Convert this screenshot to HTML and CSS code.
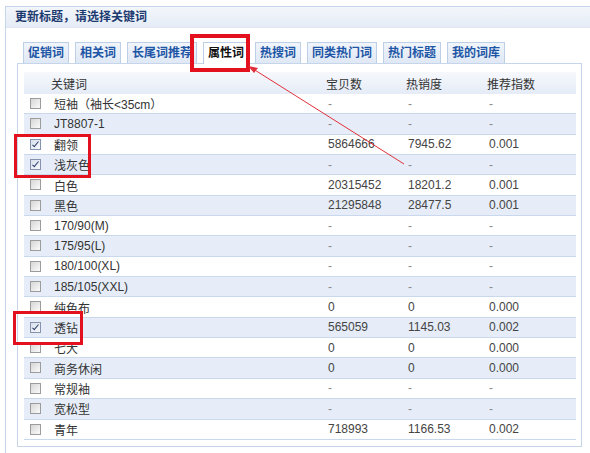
FILE: index.html
```html
<!DOCTYPE html>
<html lang="zh-CN">
<head>
    <meta charset="UTF-8">
    <title>更新标题</title>
    <link rel="stylesheet" href="styles.css">
</head>
<body>
    <div class="box">
        <div class="box-title">更新标题，请选择关键词</div>
        <div class="box-body">
            <ul class="tabs">
                <li>促销词</li>
                <li>相关词</li>
                <li>长尾词推荐</li>
                <li class="active">属性词</li>
                <li>热搜词</li>
                <li>同类热门词</li>
                <li>热门标题</li>
                <li>我的词库</li>
            </ul>
            <div class="panel">
                <table class="kw-table">
                    <thead>
                        <tr>
                            <th class="c-check"></th>
                            <th class="c-word">关键词</th>
                            <th class="c-num">宝贝数</th>
                            <th class="c-hot">热销度</th>
                            <th>推荐指数</th>
                        </tr>
                    </thead>
                    <tbody>
                        <tr><td><span class="cb"></span></td><td>短袖（袖长&lt;35cm）</td><td class="dash">-</td><td class="dash">-</td><td class="dash">-</td></tr>
                        <tr><td><span class="cb"></span></td><td>JT8807-1</td><td class="dash">-</td><td class="dash">-</td><td class="dash">-</td></tr>
                        <tr><td><span class="cb on"></span></td><td>翻领</td><td>5864666</td><td>7945.62</td><td>0.001</td></tr>
                        <tr><td><span class="cb on"></span></td><td>浅灰色</td><td class="dash">-</td><td class="dash">-</td><td class="dash">-</td></tr>
                        <tr><td><span class="cb"></span></td><td>白色</td><td>20315452</td><td>18201.2</td><td>0.001</td></tr>
                        <tr><td><span class="cb"></span></td><td>黑色</td><td>21295848</td><td>28477.5</td><td>0.001</td></tr>
                        <tr><td><span class="cb"></span></td><td>170/90(M)</td><td class="dash">-</td><td class="dash">-</td><td class="dash">-</td></tr>
                        <tr><td><span class="cb"></span></td><td>175/95(L)</td><td class="dash">-</td><td class="dash">-</td><td class="dash">-</td></tr>
                        <tr><td><span class="cb"></span></td><td>180/100(XL)</td><td class="dash">-</td><td class="dash">-</td><td class="dash">-</td></tr>
                        <tr><td><span class="cb"></span></td><td>185/105(XXL)</td><td class="dash">-</td><td class="dash">-</td><td class="dash">-</td></tr>
                        <tr><td><span class="cb"></span></td><td>纯色布</td><td>0</td><td>0</td><td>0.000</td></tr>
                        <tr><td><span class="cb on"></span></td><td>透钻</td><td>565059</td><td>1145.03</td><td>0.002</td></tr>
                        <tr><td><span class="cb"></span></td><td>七大</td><td>0</td><td>0</td><td>0.000</td></tr>
                        <tr><td><span class="cb"></span></td><td>商务休闲</td><td>0</td><td>0</td><td>0.000</td></tr>
                        <tr><td><span class="cb"></span></td><td>常规袖</td><td class="dash">-</td><td class="dash">-</td><td class="dash">-</td></tr>
                        <tr><td><span class="cb"></span></td><td>宽松型</td><td class="dash">-</td><td class="dash">-</td><td class="dash">-</td></tr>
                        <tr><td><span class="cb"></span></td><td>青年</td><td>718993</td><td>1166.53</td><td>0.002</td></tr>
                    </tbody>
                </table>
            </div>
        </div>
    </div>

    <!-- annotation marks drawn over the form -->
    <div class="mark mark-tab"></div>
    <div class="mark mark-rows"></div>
    <div class="mark mark-row"></div>
    <svg class="arrow" width="590" height="453" viewBox="0 0 590 453">
        <line x1="404" y1="164" x2="250" y2="67" stroke="#e0303a" stroke-width="1"/>
        <path d="M248 66 L258 68 L254 73 Z" fill="#e0303a"/>
    </svg>
</body>
</html>
```

FILE: styles.css
```css
body {
    margin: 0;
    font-family: "Liberation Sans", "Noto Sans CJK SC", sans-serif;
    font-size: 12px;
    color: #333;
    background: #fff;
    overflow: hidden;
    height: 453px;
    position: relative;
}
.box {
    margin: 6px 0 0 5px;
    width: 600px;
    height: 480px;
    border: 1px solid #c6d5ea;
}
.box-title {
    height: 20px;
    line-height: 20px;
    padding-left: 9px;
    font-weight: bold;
    color: #1d3a70;
    background: linear-gradient(#f3f6fb, #e5ecf6);
    border-bottom: 1px solid #dde6f2;
}
.box-body {
    padding: 14px 0 0 11px;
}
.tabs {
    list-style: none;
    margin: 0 0 -1px 0;
    padding: 0 0 0 6px;
    display: flex;
    position: relative;
}
.tabs li {
    height: 20px;
    line-height: 21px;
    padding: 0 4px;
    margin-right: 6px;
    border: 1px solid #bccfe7;
    border-bottom: none;
    background: linear-gradient(#f1f5fb, #dfe8f5);
    color: #1e56a6;
    font-weight: bold;
}
.tabs li.active {
    background: #fff;
    color: #111;
    height: 21px;
}
.panel {
    width: 552px;
    padding: 8px 5px 6px 6px;
    border: 1px solid #c6d5ea;
}
.kw-table {
    width: 552px;
    border-collapse: collapse;
}
.kw-table th {
    height: 22px;
    padding: 0 0 0 5px;
    text-align: left;
    font-weight: normal;
    color: #333;
    background: linear-gradient(#f6f8fc, #e5ecf7);
}
.kw-table td {
    height: 19.35px;
    padding: 0 0 0 7px;
    border-bottom: 1px solid #c9d8ed;
    color: #444;
}
.kw-table tbody tr:nth-child(even) td {
    background: #e6edf8;
}
.kw-table .c-check {
    width: 17px;
}
.kw-table .c-word {
    width: 270px;
}
.kw-table .c-num {
    width: 75px;
}
.kw-table .c-hot {
    width: 76px;
}
.kw-table td:first-child {
    padding-left: 6px;
}
.kw-table td:nth-child(2) {
    padding-left: 8px;
    color: #333;
}
.kw-table td.dash {
    color: #888;
}
.cb {
    display: inline-block;
    width: 9px;
    height: 9px;
    border: 1px solid #9c9c9c;
    background: linear-gradient(135deg, #d6d6d6, #fbfbfb);
    vertical-align: middle;
    position: relative;
    top: -1px;
}
.cb.on {
    border-color: #8593ad;
    background: linear-gradient(135deg, #d9e0ec, #f7f9fc);
}
.cb.on::after {
    content: "";
    position: absolute;
    left: 3px;
    top: 0;
    width: 2px;
    height: 6px;
    border: solid #2b3d6b;
    border-width: 0 1.5px 1.5px 0;
    transform: rotate(40deg);
}
.mark {
    position: absolute;
    border: 3px solid #e3101e;
}
.mark-tab {
    left: 190px;
    top: 34px;
    width: 52px;
    height: 30px;
    border-width: 4px;
}
.mark-rows {
    left: 14px;
    top: 134px;
    width: 71px;
    height: 38px;
}
.mark-row {
    left: 13px;
    top: 311px;
    width: 64px;
    height: 28px;
}
.arrow {
    position: absolute;
    left: 0;
    top: 0;
}
```
